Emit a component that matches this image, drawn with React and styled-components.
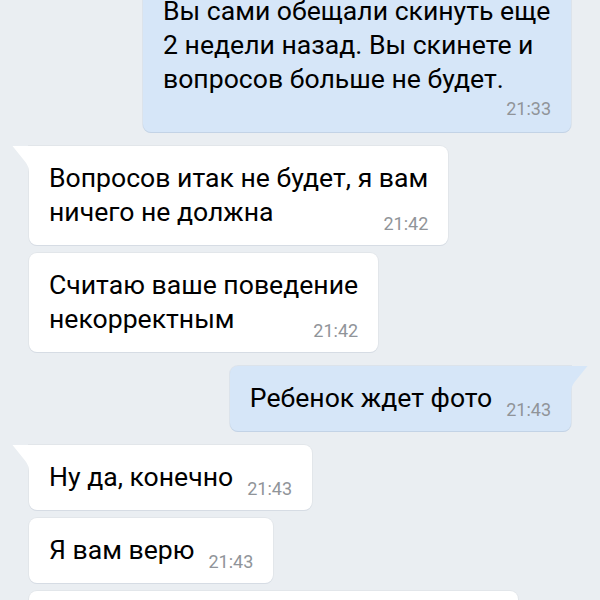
import React from "react";
import styled, { createGlobalStyle } from "styled-components";

const GlobalStyle = createGlobalStyle`
  html, body {
    margin: 0;
    padding: 0;
    background: #eaeef2;
    overflow: hidden;
  }
  body {
    font-family: Roboto, "Noto Sans", Arial, sans-serif;
  }
`;

const messages = [
  {
    id: 1,
    out: true,
    lines: ["Вы сами обещали скинуть еще", "2 недели назад. Вы скинете и", "вопросов больше не будет."],
    time: "21:33",
    width: 428,
    timeBelow: true,
  },
  { id: 2, lines: ["Вопросов итак не будет, я вам", "ничего не должна"], time: "21:42", tail: true, groupStart: true },
  { id: 3, lines: ["Считаю ваше поведение", "некорректным"], time: "21:42" },
  { id: 4, out: true, lines: ["Ребенок ждет фото"], time: "21:43", tail: true, groupStart: true },
  { id: 5, lines: ["Ну да, конечно"], time: "21:43", tail: true, groupStart: true },
  { id: 6, lines: ["Я вам верю"], time: "21:43" },
  { id: 7, lines: ["Фото будут, когда будут готовы"], time: "21:44" },
];

function Tail({ out }) {
  return (
    <TailShape $out={out} width="18" height="26" viewBox="0 0 18 26">
      <path d="M18 0 H0.5 L13 15.5 Q17 20.5 17 26 H18 Z" />
    </TailShape>
  );
}

function Message({ msg }) {
  const head = msg.timeBelow ? msg.lines : msg.lines.slice(0, -1);
  const last = msg.lines[msg.lines.length - 1];
  return (
    <Row $out={msg.out} $groupStart={msg.groupStart}>
      <Bubble $out={msg.out} $tail={msg.tail} $width={msg.width}>
        {msg.tail && <Tail out={msg.out} />}
        {head.map((line) => (
          <Line key={line}>{line}</Line>
        ))}
        {msg.timeBelow ? (
          <TimeRow>{msg.time}</TimeRow>
        ) : (
          <LastLine>
            <Line>{last}</Line>
            <Time>{msg.time}</Time>
          </LastLine>
        )}
      </Bubble>
    </Row>
  );
}

export default function App() {
  return (
    <>
      <GlobalStyle />
      <Screen>
        <Feed>
          {messages.map((m) => (
            <Message key={m.id} msg={m} />
          ))}
        </Feed>
      </Screen>
    </>
  );
}

const Screen = styled.div`
  height: 100vh;
  overflow: hidden;
  background: #eaeef2;
`;

const Feed = styled.div`
  display: flex;
  flex-direction: column;
  margin-top: -21px;
`;

const Row = styled.div`
  display: flex;
  justify-content: ${(p) => (p.$out ? "flex-end" : "flex-start")};
  padding: 0 29px;
  margin-top: ${(p) => (p.$groupStart ? "14px" : "8px")};

  &:first-child {
    margin-top: 0;
  }
`;

const Bubble = styled.div`
  position: relative;
  display: flex;
  flex-direction: column;
  box-sizing: border-box;
  width: ${(p) => (p.$width ? `${p.$width}px` : "fit-content")};
  padding: 15px 20px 16px;
  border-radius: 8px;
  background: ${(p) => (p.$out ? "#d6e6f8" : "#ffffff")};
  box-shadow: ${(p) =>
    p.$out
      ? "0 1px 0 #c3d3e6, 0 0 0 1px rgba(120, 150, 190, 0.12)"
      : "0 1px 0 #d6dce4, 0 0 0 1px rgba(0, 0, 0, 0.03)"};
  ${(p) => p.$tail && (p.$out ? "border-top-right-radius: 0;" : "border-top-left-radius: 0;")}
`;

const TailShape = styled.svg`
  position: absolute;
  top: 0;
  ${(p) => (p.$out ? "right: -17px; transform: scaleX(-1);" : "left: -17px;")}
  fill: ${(p) => (p.$out ? "#d6e6f8" : "#ffffff")};
`;

const Line = styled.div`
  font-size: 26.6px;
  line-height: 34px;
  color: #000;
  white-space: nowrap;
`;

const LastLine = styled.div`
  display: flex;
  justify-content: space-between;
  align-items: flex-end;
  gap: 14px;
`;

const Time = styled.span`
  flex-shrink: 0;
  font-size: 18px;
  line-height: 18px;
  color: #909499;
  margin-bottom: -4px;
`;

const TimeRow = styled.div`
  text-align: right;
  font-size: 18px;
  line-height: 14px;
  color: #909499;
  margin-top: 6px;
`;
